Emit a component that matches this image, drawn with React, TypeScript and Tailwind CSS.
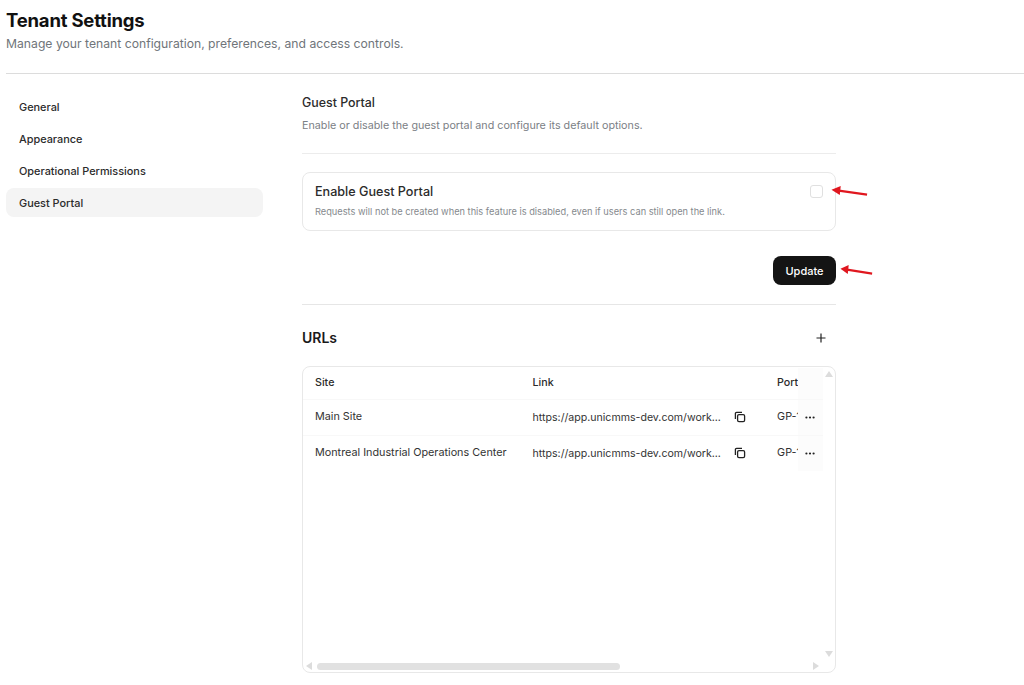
const rows = ["Main Site", "Montreal Industrial Operations Center"];

const nav = ["General", "Appearance", "Operational Permissions", "Guest Portal"];

function RedArrow({ className, width }: { className: string; width: number }) {
  return (
    <svg className={className} width={width} height="12" viewBox="0 0 38 12" preserveAspectRatio="none" fill="none">
      <path d="M37 8.6 L8 4.6" stroke="#e0171f" strokeWidth="2.2" />
      <path d="M0.5 3.8 L10 0 L9 9 Z" fill="#e0171f" />
    </svg>
  );
}

function CopyIcon() {
  return (
    <svg width="12" height="12" viewBox="0 0 12 12" fill="none" stroke="#222" strokeWidth="1.3">
      <rect x="3.6" y="3.6" width="7" height="7" rx="1.4" />
      <path d="M8 1.4H2.6A1.2 1.2 0 0 0 1.4 2.6V8" />
    </svg>
  );
}

export default function App() {
  return (
    <div className="h-[685px] w-[1024px] overflow-hidden bg-white font-['Inter',sans-serif] text-[#1a1a1a]">
      <header className="ml-[6px] h-[74px] border-b border-[#dcdcdc] pt-[9px]">
        <h1 className="text-[18.5px] leading-[23px] font-bold tracking-[-0.2px] text-[#111]">Tenant Settings</h1>
        <p className="mt-[3px] text-[12.2px] leading-[18px] text-[#70757a]">
          Manage your tenant configuration, preferences, and access controls.
        </p>
      </header>

      <div className="flex">
        <nav className="ml-[6px] flex w-[257px] flex-col gap-[3px] pt-[18px]">
          {nav.map((item) => (
            <div
              key={item}
              className={`flex h-[29px] items-center rounded-lg px-[13px] pt-[1px] text-[10.9px] font-[450] text-[#2b2b2b] ${
                item === "Guest Portal" ? "bg-[#f4f4f4]" : ""
              }`}
            >
              {item}
            </div>
          ))}
        </nav>

        <main className="ml-[39px] w-[534px]">
          <h2 className="mt-[20px] text-[12.4px] leading-[17px] font-medium text-[#2b2b2b]">Guest Portal</h2>
          <p className="mt-[7px] text-[10.75px] leading-[15px] text-[#7b8085]">
            Enable or disable the guest portal and configure its default options.
          </p>
          <div className="mt-[20px] border-t border-[#ececec]" />

          <section className="relative mt-[18px] h-[59px] rounded-lg border border-[#e8e8e8] px-[12px] pt-[10px]">
            <div className="text-[12.6px] leading-[17px] font-medium text-[#2b2b2b]">Enable Guest Portal</div>
            <p className="mt-[5px] text-[9.25px] leading-[14px] text-[#85898d]">
              Requests will not be created when this feature is disabled, even if users can still open the link.
            </p>
            <div className="absolute top-[12px] right-[12px] h-[13px] w-[13px] rounded-[3px] border border-[#e0e0e0] bg-white" />
            <RedArrow width={37} className="absolute top-[13px] right-[-33px]" />
          </section>

          <div className="relative mt-[25px] flex justify-end">
            <button className="h-[29px] w-[63px] rounded-lg bg-[#141414] pt-[1px] text-[11px] font-medium text-white">Update</button>
            <RedArrow width={33} className="absolute top-[9px] right-[-37px]" />
          </div>

          <div className="mt-[19px] border-t border-[#e6e6e6]" />

          <div className="mt-[24px] flex h-[17px] items-center justify-between pr-[10px]">
            <h2 className="text-[14px] font-semibold text-[#1a1a1a]">URLs</h2>
            <svg width="10" height="10" viewBox="0 0 10 10" stroke="#222" strokeWidth="1.2">
              <path d="M5 .5v9M.5 5h9" />
            </svg>
          </div>

          <div className="relative mt-[20px] h-[307px] overflow-hidden rounded-lg border border-[#e8e8e8]">
            <div className="mr-[12px] flex h-[33px] items-center border-b border-[#f8f8f8] pt-[1px] text-[10.7px] font-medium text-[#2b2b2b]">
              <div className="w-[230px] pl-[12px]">Site</div>
              <div className="w-[245px]">Link</div>
              <div className="w-[21px]">Port</div>
              <div className="h-full w-[25px] bg-[#fcfcfc]" />
            </div>
            {rows.map((site, i) => (
              <div
                key={site}
                className={`mr-[12px] flex h-[36px] items-center border-b text-[10.8px] text-[#333] ${
                  i === 0 ? "border-[#f8f8f8]" : "border-transparent"
                }`}
              >
                <div className="w-[230px] pl-[12px]">{site}</div>
                <div className="w-[190px] text-[10.6px] whitespace-nowrap">https://app.unicmms-dev.com/work...</div>
                <div className="mb-[1px] flex w-[55px] pl-[12px]">
                  <CopyIcon />
                </div>
                <div className="w-[21px] overflow-hidden whitespace-nowrap">GP-1</div>
                <div className="flex h-full w-[25px] items-center bg-[#fcfcfc] pb-[1px] pl-[7px]">
                  <svg width="10" height="3" viewBox="0 0 10 3" fill="#222">
                    <circle cx="1.4" cy="1.5" r="1.1" />
                    <circle cx="5" cy="1.5" r="1.1" />
                    <circle cx="8.6" cy="1.5" r="1.1" />
                  </svg>
                </div>
              </div>
            ))}

            {/* fake scrollbar arrows, the browser draws none here */}
            <div className="absolute top-[4px] right-[2px] h-0 w-0 border-x-[4px] border-b-[6px] border-x-transparent border-b-[#dcdcdc]" />
            <div className="absolute right-[2px] bottom-[15px] h-0 w-0 border-x-[4px] border-t-[6px] border-x-transparent border-t-[#dcdcdc]" />
            <div className="absolute bottom-[2px] left-[3px] h-0 w-0 border-y-[4px] border-r-[6px] border-y-transparent border-r-[#dcdcdc]" />
            <div className="absolute right-[16px] bottom-[2px] h-0 w-0 border-y-[4px] border-l-[6px] border-y-transparent border-l-[#dcdcdc]" />
            <div className="absolute bottom-[2px] left-[14px] h-[7px] w-[303px] rounded-full bg-[#e1e1e1]" />
          </div>
        </main>
      </div>
    </div>
  );
}
